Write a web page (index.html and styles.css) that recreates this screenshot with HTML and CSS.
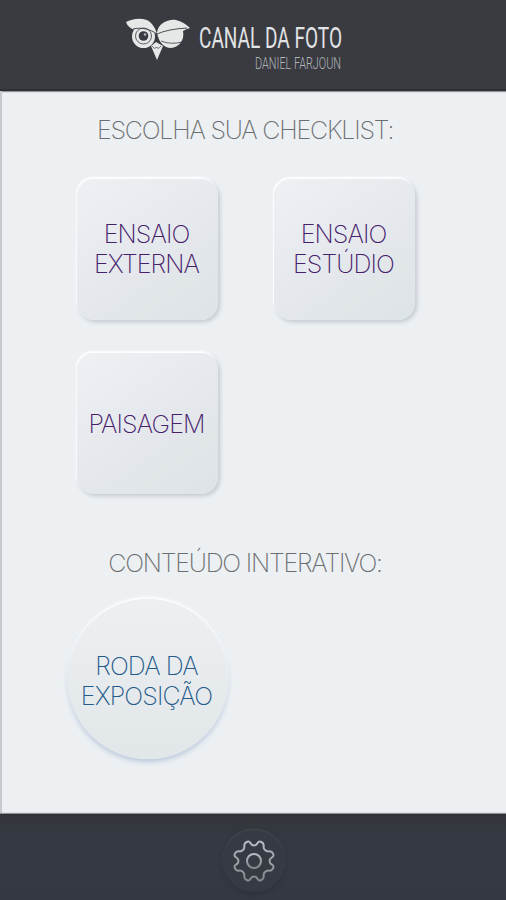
FILE: index.html
```
<!DOCTYPE html>
<html lang="pt-BR">

<head>
    <meta charset="UTF-8">
    <title>Canal da Foto</title>
    <link rel="stylesheet" href="styles.css">
</head>

<body>
    <div class="app">
        <header class="header">
            <svg class="logo" width="320" height="70" viewBox="124 14 320 70">
                <!-- coruja -->
                <g fill="#e6e7e7">
                    <circle cx="143.500" cy="36.500" r="11.500" />
                    <path d="M126 22 C133 18 146 17 151 23 Q155 27 157 34 C149 29 142 30 135 30 Q128 28 126 22z" />
                    <path d="M157 33 C158 24 167 19 176 20 Q184 22 190 28 Q186 29 183 31 C185 41 178 48 170 48 C163 47 159 42 157 33z" />
                    <path d="M151 46 L156 42 L163 46 L157 60z" />
                </g>
                <g fill="none" stroke="#393c43">
                    <circle cx="143.500" cy="36" r="8" stroke-width="0.800" />
                    <circle cx="143.500" cy="36" r="4.800" fill="#393c43" stroke="none" />
                    <path d="M133 29 C141 27 150 29 157 34 Q168 29 187 28" stroke-width="0.900" />
                    <path d="M161 41 Q171 45 182 42" stroke-width="0.800" />
                    <path d="M152 46 Q155 50 156.500 47 Q158 50 161 46" stroke-width="0.700" />
                </g>
                <circle cx="145" cy="34.500" r="1.200" fill="#b9bbbd" />
                <text class="brand" x="199" y="47.500" textLength="143" lengthAdjust="spacingAndGlyphs">CANAL DA FOTO</text>
                <text class="author" x="255" y="69" textLength="86" lengthAdjust="spacingAndGlyphs">DANIEL FARJOUN</text>
            </svg>
        </header>

        <main class="content">
            <h2 class="title">ESCOLHA SUA CHECKLIST:</h2>
            <div class="cards">
                <a class="card">ENSAIO<br>EXTERNA</a>
                <a class="card">ENSAIO<br>ESTÚDIO</a>
                <a class="card single">PAISAGEM</a>
            </div>
            <h2 class="title title-interativo">CONTEÚDO INTERATIVO:</h2>
            <a class="roda">RODA DA<br>EXPOSIÇÃO</a>
        </main>

        <footer class="footer">
            <div class="config">
                <svg width="46" height="46" viewBox="-23 -23 46 46" fill="none" stroke="url(#metal)" stroke-width="2">
                    <defs>
                        <linearGradient id="metal" x1="0" y1="0" x2="0" y2="1">
                            <stop offset="0" stop-color="#b9bcc4" />
                            <stop offset="1" stop-color="#85878d" />
                        </linearGradient>
                    </defs>
                    <path d="M0 -15.500 C5 -15.500 2.500 -21.300 7.400 -19 C12.300 -16.700 7.400 -14.400 11 -11
                        C14.400 -7.400 16.700 -12.300 19 -7.400 C21.300 -2.500 15.500 -5 15.500 0
                        C15.500 5 21.300 2.500 19 7.400 C16.700 12.300 14.400 7.400 11 11
                        C7.400 14.400 12.300 16.700 7.400 19 C2.500 21.300 5 15.500 0 15.500
                        C-5 15.500 -2.500 21.300 -7.400 19 C-12.300 16.700 -7.400 14.400 -11 11
                        C-14.400 7.400 -16.700 12.300 -19 7.400 C-21.300 2.500 -15.500 5 -15.500 0
                        C-15.500 -5 -21.300 -2.500 -19 -7.400 C-16.700 -12.300 -14.400 -7.400 -11 -11
                        C-7.400 -14.400 -12.300 -16.700 -7.400 -19 C-2.500 -21.300 -5 -15.500 0 -15.500z" />
                    <circle r="7" />
                </svg>
            </div>
        </footer>
    </div>
</body>

</html>
```
FILE: styles.css
```
* {
    padding: 0;
    margin: 0;
    box-sizing: border-box;
}

body {
    background: #ecf0f3;
    font-family: Inter, "Liberation Sans", sans-serif;
}

.app {
    height: 900px;
    display: flex;
    flex-direction: column;
    overflow: hidden;
}

.header {
    height: 91px;
    padding: 14px 0 0 124px;
    background: #393b41;
    border-bottom: 2px solid #303136;
    box-shadow: 0 1px 1px #92959a;
}

.logo {
    display: block;
}

.brand {
    font-family: Roboto, sans-serif;
    font-size: 30px;
    font-weight: 400;
    fill: #e2e3e4;
}

.author {
    font-family: Roboto, sans-serif;
    font-size: 17px;
    font-weight: 300;
    fill: #b4b6b9;
}

.content {
    flex: 1;
    padding: 23px 18px 0 0;
    border-left: 2px solid #c6c9ce;
}

.title {
    font-size: 25px;
    font-weight: 200;
    line-height: 32px;
    letter-spacing: -1.2px;
    text-align: center;
    color: #6c6f71;
}

.cards {
    display: grid;
    grid-template-columns: 141px 141px;
    gap: 33px 56px;
    padding: 33px 0 0 75px;
}

.card,
.roda {
    display: flex;
    align-items: center;
    justify-content: center;
    text-align: center;
    font-size: 25px;
    font-weight: 200;
    line-height: 30px;
    letter-spacing: -0.9px;
}

.card {
    height: 141px;
    padding: 0 2px 2px 0;
    border-radius: 17px;
    color: #45206b;
    background: linear-gradient(145deg, #eef1f4, #e5e8ec 50%, #dde4e6);
    box-shadow: -1px -2px 2px #fff, 2px 2px 4px #c3c8d0;
}

.single {
    padding: 0 2px 0 0;
}

.title-interativo {
    margin-top: 53px;
}

.roda {
    width: 160px;
    height: 160px;
    padding: 3px 3px 0 0;
    margin: 20px 0 0 66px;
    border-radius: 50%;
    color: #245a8a;
    background: linear-gradient(#edf0f3, #e1e6e8);
    box-shadow: 0 -2px 3px #fff, 0 3px 5px #bccadd;
}

.footer {
    height: 86px;
    padding-top: 15px;
    background: linear-gradient(#33353a, #353943 30%, #343842);
    border-top: 1px solid #2c2e33;
    box-shadow: 0 -1px 1px #92959a;
}

.config {
    width: 62px;
    height: 62px;
    margin-left: 223px;
    display: flex;
    align-items: center;
    justify-content: center;
    border-radius: 50%;
    background: #363a43;
    box-shadow: 0 -1px 2px #4a4c51, 0 2px 4px #2d313a;
}
```
